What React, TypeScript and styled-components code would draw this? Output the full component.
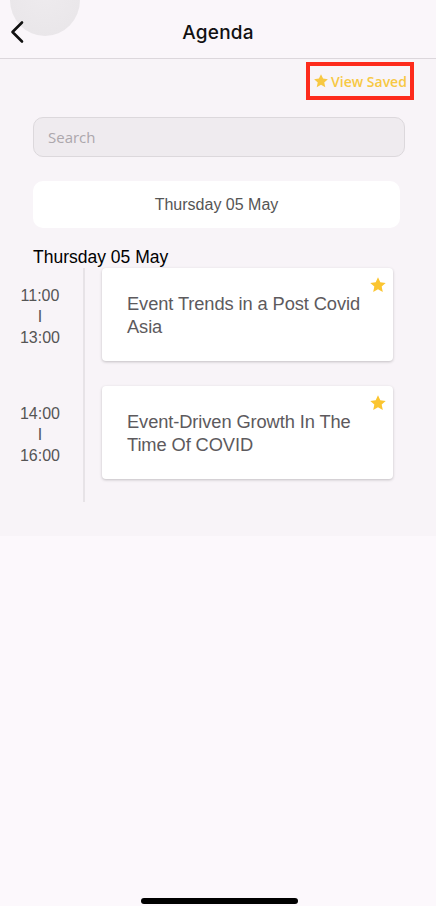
import React from "react";
import styled, { createGlobalStyle } from "styled-components";

const Global = createGlobalStyle`
  html, body { margin: 0; padding: 0; background: #fcf8fc; }
  * { box-sizing: border-box; }
`;

const Page = styled.div`
  width: 436px;
  min-height: 906px;
  display: flex;
  flex-direction: column;
  background: #fcf8fc;
  position: relative;
  overflow: hidden;
`;

const Header = styled.header`
  position: relative;
  height: 59px;
  display: flex;
  align-items: center;
  justify-content: center;
  border-bottom: 1px solid #dcd7dc;
  background: #faf6fa;
`;

const Ripple = styled.div`
  position: absolute;
  left: 10px;
  top: -36px;
  width: 70px;
  height: 72px;
  border-radius: 50%;
  background: radial-gradient(circle at 50% 40%, #eeebee 0%, #e8e5e8 100%);
`;

const BackButton = styled.button`
  position: absolute;
  left: 6px;
  top: 19px;
  width: 22px;
  height: 26px;
  padding: 0;
  border: none;
  background: transparent;
  display: flex;
  align-items: center;
  justify-content: center;
`;

const Title = styled.h1`
  margin: 0;
  font-family: Inter, "Noto Sans", sans-serif;
  font-weight: 500;
  font-size: 19px;
  color: #111;
  letter-spacing: 0.2px;
  padding-top: 6px;
`;

const Content = styled.main`
  background: #f8f4f8;
  display: flex;
  flex-direction: column;
  padding-bottom: 34px;
`;

const SavedRow = styled.div`
  display: flex;
  justify-content: flex-end;
  padding: 3px 22px 0 0;
`;

const SavedBox = styled.div`
  height: 38px;
  width: 108px;
  border: 4px solid #fd2b1c;
  display: flex;
  align-items: center;
  justify-content: center;
  gap: 2px;
  font-family: "Open Sans", sans-serif;
  font-weight: 600;
  font-size: 14px;
  color: #f7c843;
`;

const Search = styled.div`
  margin: 17px 0 0 33px;
  width: 372px;
  height: 40px;
  border-radius: 10px;
  border: 1px solid #dcd8dc;
  background: #efebef;
  display: flex;
  align-items: center;
  padding-left: 14px;
  font-family: "Open Sans", sans-serif;
  font-size: 15px;
  color: #aca7ac;
`;

const DateBox = styled.div`
  margin: 24px 0 0 33px;
  width: 367px;
  height: 47px;
  border-radius: 10px;
  background: #ffffff;
  display: flex;
  align-items: center;
  justify-content: center;
  padding-top: 1px;
  font-family: "Liberation Sans", Arial, sans-serif;
  font-size: 16px;
  color: #555;
`;

const DayHeading = styled.h2`
  margin: 19px 0 0 33px;
  font-family: "Liberation Sans", Arial, sans-serif;
  font-weight: 400;
  font-size: 17.5px;
  line-height: 20px;
  color: #000;
`;

const Timeline = styled.div`
  margin-top: 1px;
  display: flex;
  flex-direction: column;
  gap: 25px;
  padding-bottom: 23px;
  position: relative;
  &::before {
    content: "";
    position: absolute;
    left: 83px;
    top: 0;
    bottom: 0;
    width: 2px;
    background: #e7e3e7;
  }
`;

const Row = styled.div`
  display: flex;
  align-items: flex-start;
`;

const TimeCol = styled.div`
  width: 82px;
  padding-top: 17px;
  padding-right: 2px;
  display: flex;
  flex-direction: column;
  align-items: center;
  font-family: "Liberation Sans", Arial, sans-serif;
  font-size: 16px;
  line-height: 21px;
  color: #555;
`;

const Card = styled.div`
  position: relative;
  margin-left: 20px;
  width: 291px;
  height: 93px;
  background: #fff;
  border-radius: 4px;
  box-shadow: 0 1px 3px rgba(0, 0, 0, 0.22);
  padding: 24px 30px 0 25px;
`;

const CardTitle = styled.div`
  font-family: "Liberation Sans", Arial, sans-serif;
  font-size: 18.3px;
  line-height: 23px;
  color: #5d5a5d;
  letter-spacing: -0.1px;
`;

const StarSpot = styled.div`
  position: absolute;
  top: 8px;
  right: 6px;
  width: 18px;
  height: 18px;
`;

const Indicator = styled.div`
  position: absolute;
  left: 141px;
  bottom: 2px;
  width: 157px;
  height: 6px;
  border-radius: 3px;
  background: #000;
`;

const Star = ({ size, color }: { size: number; color: string }) => (
  <svg width={size} height={size} viewBox="0 0 24 24">
    <path
      d="M12 1.8l3.1 6.6 7.2.8-5.4 4.9 1.5 7.1L12 17.6l-6.4 3.6 1.5-7.1L1.7 9.2l7.2-.8z"
      fill={color}
    />
  </svg>
);

const sessions = [
  { start: "11:00", end: "13:00", title: "Event Trends in a Post Covid Asia" },
  { start: "14:00", end: "16:00", title: "Event-Driven Growth In The Time Of COVID" },
];

export default function App() {
  return (
    <Page>
      <Global />
      <Header>
        <Ripple />
        <BackButton aria-label="Back">
          <svg width="16" height="24" viewBox="0 0 16 24">
            <path d="M13 2.5L3.5 12l9.5 9.5" fill="none" stroke="#111" strokeWidth="2.6" strokeLinecap="round" strokeLinejoin="round" />
          </svg>
        </BackButton>
        <Title>Agenda</Title>
      </Header>
      <Content>
        <SavedRow>
          <SavedBox>
            <Star size={16} color="#f7c843" />
            View Saved
          </SavedBox>
        </SavedRow>
        <Search>Search</Search>
        <DateBox>Thursday 05 May</DateBox>
        <DayHeading>Thursday 05 May</DayHeading>
        <Timeline>
          {sessions.map((s) => (
            <Row key={s.start}>
              <TimeCol>
                <span>{s.start}</span>
                <span>I</span>
                <span>{s.end}</span>
              </TimeCol>
              <Card>
                <CardTitle>{s.title}</CardTitle>
                <StarSpot>
                  <Star size={18} color="#fbc530" />
                </StarSpot>
              </Card>
            </Row>
          ))}
        </Timeline>
      </Content>
      <Indicator />
    </Page>
  );
}
